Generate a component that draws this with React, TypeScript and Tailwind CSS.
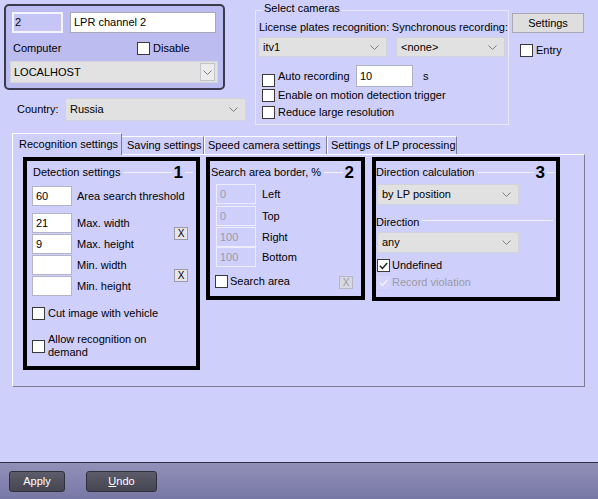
import type { ReactNode } from 'react'

function Chevron() {
  return (
    <svg width="9" height="5" viewBox="0 0 9 5" className="shrink-0">
      <path d="M0.5 0.5 L4.5 4.5 L8.5 0.5" fill="none" stroke="#7c7c86" strokeWidth="1" />
    </svg>
  )
}

function Check({ checked, disabled }: { checked?: boolean; disabled?: boolean }) {
  return (
    <span
      className={`flex h-[13px] w-[13px] shrink-0 items-center justify-center border ${
        disabled ? 'border-[#d6d6fa] bg-[#d3d3fb]' : 'border-[#3a3a3a] bg-white'
      }`}
    >
      {checked && (
        <svg width="9" height="8" viewBox="0 0 9 8">
          <path
            d="M0.8 3.8 L3.4 6.4 L8.2 1"
            fill="none"
            stroke={disabled ? '#f2f2fc' : '#1e1e1e'}
            strokeWidth="1.4"
          />
        </svg>
      )}
    </span>
  )
}

function Combo({ value, className }: { value: string; className: string }) {
  return (
    <div
      className={`flex shrink-0 items-center justify-between border border-[#d2d2da] bg-[#e1e1e1] pl-[4px] pr-[7px] ${className}`}
    >
      <span>{value}</span>
      <Chevron />
    </div>
  )
}

function Field({ value, disabled }: { value: string; disabled?: boolean }) {
  return (
    <div
      className={`flex h-[20px] w-[40px] shrink-0 items-center border pl-[3px] ${
        disabled
          ? 'border-[#ececfa] bg-[#cfcffc] text-[#9a9aa6]'
          : 'border-[#b4b4c8] bg-white'
      }`}
    >
      {value}
    </div>
  )
}

function XButton({ disabled }: { disabled?: boolean }) {
  return (
    <div
      className={`flex h-[13px] w-[14px] shrink-0 items-center justify-center border text-[10px] ${
        disabled
          ? 'border-[#b8b8c4] bg-[#d8d8e2] text-[#9a9aa6]'
          : 'border-[#9a9aa8] bg-[#e4e4ea] text-black'
      }`}
    >
      X
    </div>
  )
}

function Title({ text, num, tail }: { text: string; num: string; tail?: boolean }) {
  return (
    <div className="flex h-[22px] items-center">
      <span>{text}</span>
      <span className="ml-[3px] h-px flex-1 bg-[#f2f2ff]" />
      <span className="px-[2px] text-[17px] font-bold leading-none">{num}</span>
      {tail && <span className="h-px w-[8px] bg-[#f2f2ff]" />}
    </div>
  )
}

function Row({ children }: { children: ReactNode }) {
  return <div className="flex h-[20px] items-center">{children}</div>
}

export default function App() {
  return (
    <div className="flex h-[499px] w-[598px] flex-col overflow-hidden whitespace-nowrap bg-[#cfcffc] font-['Liberation_Sans',Arial,sans-serif] text-[11px] leading-[13px] text-black">
      {/* top area */}
      <div className="flex h-[133px] shrink-0">
        <div className="w-[255px] shrink-0 pl-[4px] pt-[4px]">
          <div className="h-[86px] w-[221px] rounded-[5px] border-2 border-[#3a3a4c] bg-[#bcbcf0] px-[6px] pt-[6px]">
            <div className="flex gap-[7px]">
              <div className="flex h-[21px] w-[51px] items-center border-2 border-[#f4f4ff] bg-[#c6c6f6] pl-[1px]">
                2
              </div>
              <div className="flex h-[21px] w-[146px] items-center border border-[#a8a8b8] bg-white pl-[3px]">
                LPR channel 2
              </div>
            </div>
            <div className="flex h-[28px] items-center pt-[2px]">
              <span className="w-[125px] pl-[1px]">Computer</span>
              <Check />
              <span className="ml-[3px]">Disable</span>
            </div>
            <div className="-ml-[2px] flex h-[22px] w-[208px] items-center justify-between border border-[#d4d4dc] bg-[#e2e2e2] pl-[3px] pr-[2px]">
              <span>LOCALHOST</span>
              <div className="flex h-[18px] w-[15px] items-center justify-center border border-[#c4c4cc] bg-[#ececec]">
                <Chevron />
              </div>
            </div>
          </div>
          <div className="mt-[8px] flex items-center">
            <span className="ml-[13px] w-[48px]">Country:</span>
            <Combo value="Russia" className="h-[23px] w-[181px]" />
          </div>
        </div>

        <div className="relative mt-[10px] h-[115px] w-[254px] shrink-0 border border-[#e8e8fa] pl-[2px]">
          <span className="absolute -top-[9px] left-[6px] bg-[#cfcffc] px-[2px]">Select cameras</span>
          <div className="mt-[9px] flex h-[14px] items-center">
            <span className="ml-[1px] w-[134px]">License plates recognition:</span>
            <span>Synchronous recording:</span>
          </div>
          <div className="mt-[3px] flex gap-[9px]">
            <Combo value="itv1" className="h-[20px] w-[129px]" />
            <Combo value="<none>" className="h-[20px] w-[109px]" />
          </div>
          <div className="mt-[8px] flex h-[22px] items-end">
            <span className="ml-[4px]">
              <Check />
            </span>
            <span className="ml-[3px] w-[78px] self-center">Auto recording</span>
            <div className="flex h-[22px] w-[57px] items-center border border-[#b0b0c0] bg-white pl-[3px]">
              10
            </div>
            <span className="ml-[10px] self-center">s</span>
          </div>
          <div className="mt-[2px] flex h-[13px] items-center pl-[4px]">
            <Check />
            <span className="ml-[3px]">Enable on motion detection trigger</span>
          </div>
          <div className="mt-[4px] flex h-[13px] items-center pl-[4px]">
            <Check />
            <span className="ml-[3px]">Reduce large resolution</span>
          </div>
        </div>

        <div className="ml-[3px] pt-[13px]">
          <div className="flex h-[20px] w-[72px] items-center justify-center border border-[#a9a9b4] bg-[#dedede]">
            Settings
          </div>
          <div className="ml-[8px] mt-[11px] flex items-center">
            <Check />
            <span className="ml-[3px]">Entry</span>
          </div>
        </div>
      </div>

      {/* tabs */}
      <div className="ml-[12px] flex w-[573px] flex-col">
        <div className="relative z-10 -mb-px flex h-[22px] items-end">
          <div className="flex h-[22px] w-[110px] items-center border-l border-r border-t border-l-white border-r-[#7c7c94] border-t-white bg-[#cfcffc] pl-[6px]">
            Recognition settings
          </div>
          <div className="mb-px flex h-[18px] w-[82px] items-center border-r border-t border-r-[#7c7c94] border-t-white pl-[5px]">
            Saving settings
          </div>
          <div className="mb-px flex h-[18px] w-[123px] items-center border-l border-r border-t border-l-white border-r-[#7c7c94] border-t-white pl-[3px]">
            Speed camera settings
          </div>
          <div className="mb-px flex h-[18px] w-[130px] items-center border-l border-r border-t border-l-white border-r-[#7c7c94] border-t-white pl-[3px]">
            Settings of LP processing
          </div>
        </div>

        <div className="flex h-[233px] items-start border border-b-[#7c7c94] border-l-white border-r-[#7c7c94] border-t-white pl-[10px] pt-[2px]">
          {/* 1 */}
          <div className="h-[213px] w-[177px] shrink-0 border-4 border-black">
            <div className="pl-[6px] pr-[3px]">
              <Title text="Detection settings" num="1" tail />
            </div>
            <div className="pl-[5px]">
              <div className="mt-[3px]">
                <Row>
                  <Field value="60" />
                  <span className="ml-[5px]">Area search threshold</span>
                </Row>
              </div>
              <div className="mt-[7px] flex items-center">
                <div className="flex w-[142px] flex-col gap-[1px]">
                  <Row>
                    <Field value="21" />
                    <span className="ml-[5px]">Max. width</span>
                  </Row>
                  <Row>
                    <Field value="9" />
                    <span className="ml-[5px]">Max. height</span>
                  </Row>
                </div>
                <XButton />
              </div>
              <div className="mt-[1px] flex items-center">
                <div className="flex w-[142px] flex-col gap-[1px]">
                  <Row>
                    <Field value="" />
                    <span className="ml-[5px]">Min. width</span>
                  </Row>
                  <Row>
                    <Field value="" />
                    <span className="ml-[5px]">Min. height</span>
                  </Row>
                </div>
                <XButton />
              </div>
              <div className="mt-[11px] flex items-center">
                <Check />
                <span className="ml-[3px]">Cut image with vehicle</span>
              </div>
              <div className="mt-[13px] flex items-center">
                <Check />
                <span className="ml-[3px] w-[118px] whitespace-normal">Allow recognition on demand</span>
              </div>
            </div>
          </div>

          {/* 2 */}
          <div className="ml-[6px] h-[143px] w-[159px] shrink-0 border-4 border-black">
            <div className="pl-[1px] pr-[5px]">
              <Title text="Search area border, %" num="2" />
            </div>
            <div className="pl-[6px]">
              <div className="mt-[1px]">
                <Row>
                  <Field value="0" disabled />
                  <span className="ml-[6px]">Left</span>
                </Row>
              </div>
              <div className="mt-[2px]">
                <Row>
                  <Field value="0" disabled />
                  <span className="ml-[6px]">Top</span>
                </Row>
              </div>
              <div className="mt-[1px]">
                <Row>
                  <Field value="100" disabled />
                  <span className="ml-[6px]">Right</span>
                </Row>
              </div>
              <Row>
                <Field value="100" disabled />
                <span className="ml-[6px]">Bottom</span>
              </Row>
            </div>
            <div className="mt-[6px] flex items-center pl-[5px] pr-[8px]">
              <Check />
              <span className="ml-[2px]">Search area</span>
              <span className="ml-auto mt-[3px]">
                <XButton disabled />
              </span>
            </div>
          </div>

          {/* 3 */}
          <div className="ml-[7px] h-[144px] w-[188px] shrink-0 border-4 border-black">
            <div className="pr-[1px]">
              <Title text="Direction calculation" num="3" tail />
            </div>
            <div className="ml-[1px] mt-[1px]">
              <Combo value="by LP position" className="h-[21px] w-[142px]" />
            </div>
            <div className="mt-[10px] flex h-[14px] items-center pr-[3px]">
              <span>Direction</span>
              <span className="mb-[3px] ml-[3px] h-px flex-1 bg-[#f2f2ff]" />
            </div>
            <div className="ml-[1px] mt-[3px]">
              <Combo value="any" className="h-[21px] w-[142px]" />
            </div>
            <div className="ml-[1px] mt-[6px] flex h-[13px] items-center">
              <Check checked />
              <span className="ml-[2px]">Undefined</span>
            </div>
            <div className="ml-[1px] mt-[4px] flex h-[13px] items-center">
              <Check checked disabled />
              <span className="ml-[2px] text-[#9a9aa8]">Record violation</span>
            </div>
          </div>
        </div>
      </div>

      <div className="flex-1" />

      {/* bottom bar */}
      <div className="flex h-[37px] shrink-0 items-start gap-[21px] border-t border-[#2e2e3e] bg-linear-to-b from-[#9090b8] to-[#7878a6] pl-[9px] pt-[8px]">
        <div className="flex h-[21px] w-[56px] items-center justify-center rounded-[3px] border border-[#30303c] bg-linear-to-b from-[#5c5c6a] to-[#464652] text-white">
          Apply
        </div>
        <div className="flex h-[21px] w-[71px] items-center justify-center rounded-[3px] border border-[#30303c] bg-linear-to-b from-[#5c5c6a] to-[#464652] text-white">
          <span className="underline">U</span>ndo
        </div>
      </div>
    </div>
  )
}
